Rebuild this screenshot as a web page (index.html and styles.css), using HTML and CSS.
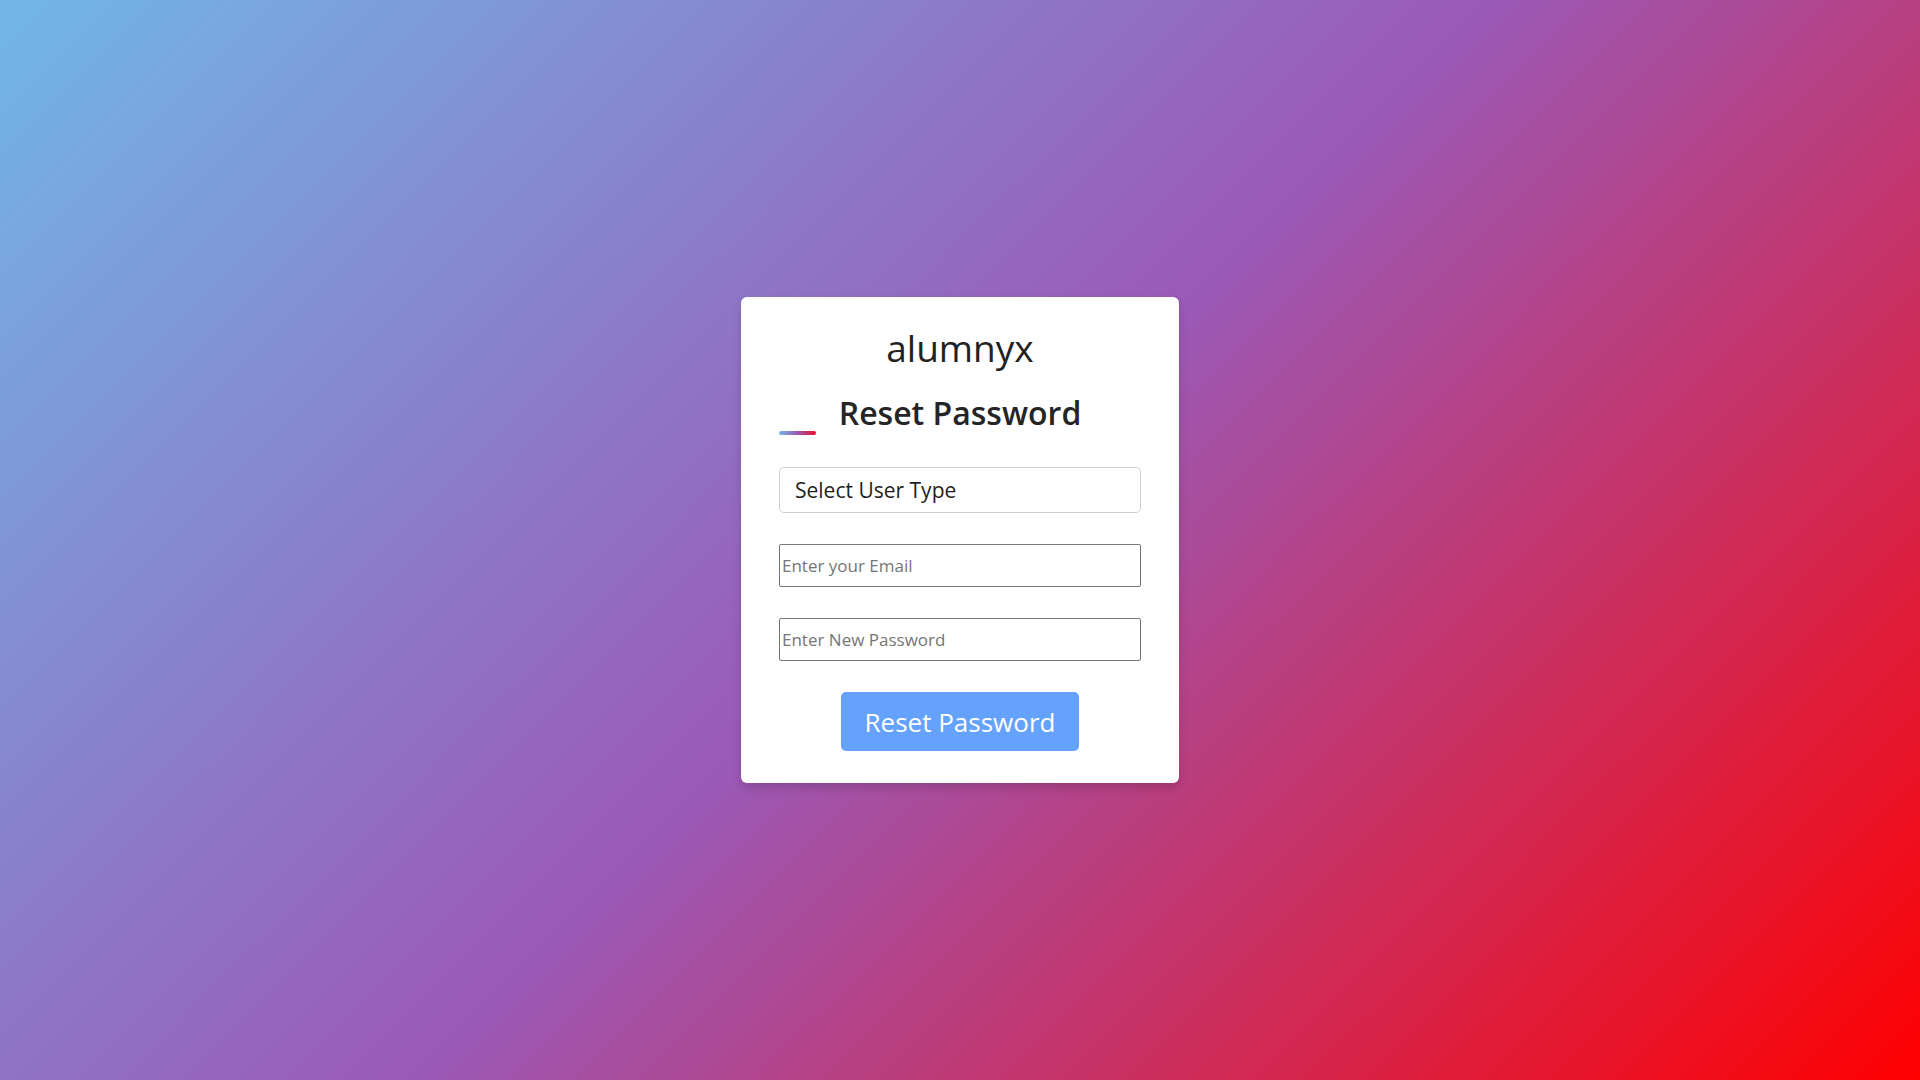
FILE: index.html
```html
<!DOCTYPE html>
<html lang="en">
<head>
<meta charset="utf-8">
<title>alumnyx - Reset Password</title>
<link rel="stylesheet" href="styles.css">
</head>
<body>
<div class="container">
  <div class="logo">alumnyx</div>
  <div class="title">Reset Password</div>
  <form class="form">
    <select class="select">
      <option>Select User Type</option>
    </select>
    <input class="field" type="email" placeholder="Enter your Email">
    <input class="field" type="password" placeholder="Enter New Password">
    <button class="btn" type="button">Reset Password</button>
  </form>
</div>
</body>
</html>
```

FILE: styles.css
```css
* {
  box-sizing: border-box;
}

html, body {
  margin: 0;
  padding: 0;
  height: 100%;
}

body {
  display: flex;
  align-items: center;
  justify-content: center;
  font-family: "Open Sans", "Noto Sans", sans-serif;
  background: linear-gradient(135deg, #71b7e6, #9b59b6, #ff0000);
  color: #1f1f1f;
}

.container {
  width: 438px;
  background: #ffffff;
  border-radius: 6px;
  padding: 26px 38px 32px;
  box-shadow: 0 5px 10px rgba(0, 0, 0, 0.15);
}

.logo {
  text-align: center;
  font-size: 37px;
  line-height: 50px;
  font-weight: 400;
  color: #222;
}

.title {
  position: relative;
  text-align: center;
  font-size: 32px;
  font-weight: 600;
  line-height: 50px;
  margin-top: 15px;
  padding-bottom: 0;
  color: #252525;
}

.title::before {
  content: "";
  position: absolute;
  left: 0;
  bottom: 3px;
  width: 37px;
  height: 4px;
  border-radius: 2px;
  background: linear-gradient(90deg, #71b7e6, #9b59b6, #f00a2a);
}

.form {
  display: flex;
  flex-direction: column;
  margin-top: 29px;
}

.select {
  appearance: none;
  -webkit-appearance: none;
  height: 46px;
  width: 100%;
  border: 1px solid #cfcfcf;
  border-radius: 5px;
  background: #fff;
  padding: 0 15px;
  font-family: inherit;
  font-size: 21px;
  color: #1f1f1f;
}

.field {
  height: 43px;
  width: 100%;
  margin-top: 31px;
  border: 1px solid #767676;
  border-radius: 2px;
  padding: 1px 2px;
  font-family: inherit;
  font-size: 17px;
  color: #222;
}

.field::placeholder {
  color: #757575;
}

.btn {
  align-self: center;
  margin-top: 31px;
  width: 238px;
  height: 59px;
  border: none;
  border-radius: 5px;
  background: #64a2fe;
  color: #fff;
  font-family: inherit;
  font-size: 26px;
  font-weight: 500;
  cursor: pointer;
}
```
